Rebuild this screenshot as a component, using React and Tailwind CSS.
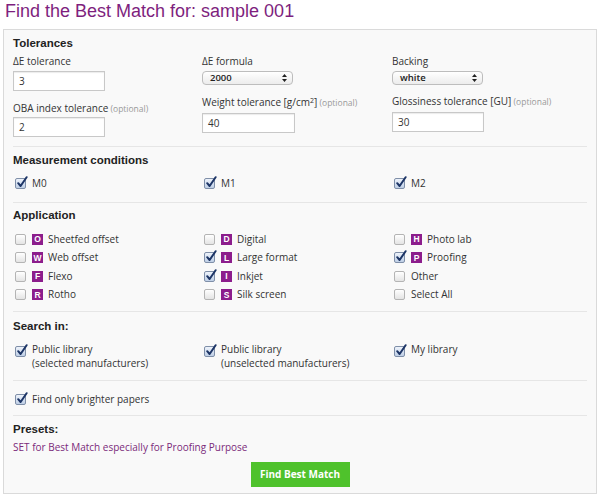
import React from "react";

const Check = ({ checked, className = "" }) => (
  <span
    className={
      "relative inline-block w-[11px] h-[11px] shrink-0 rounded-[2px] border " +
      (checked
        ? "border-[#7f8fa8] bg-gradient-to-b from-[#eef3fb] to-[#bfcfe6] "
        : "border-[#b4b4b4] bg-gradient-to-b from-white to-[#e4e4e4] ") +
      className
    }
  >
    {checked && (
      <svg
        className="absolute left-[0px] top-[-3px] w-[12px] h-[13px]"
        viewBox="0 0 12 13"
      >
        <path
          d="M2.2 7.2 L4.6 10 L10.6 1.2"
          fill="none"
          stroke="#1d3566"
          strokeWidth="2"
          strokeLinecap="round"
          strokeLinejoin="round"
        />
      </svg>
    )}
  </span>
);

const Heading = ({ children }) => (
  <div className="h-[14px] leading-[14px] text-[11.5px] font-bold text-[#222] font-['Liberation_Sans',Arial,sans-serif]">
    {children}
  </div>
);

const Input = ({ value, className = "" }) => (
  <div
    className={
      "w-[92px] h-[20px] border border-[#c8c8c8] bg-white pl-[5px] text-[10px] leading-[18px] text-[#333] shadow-[inset_0_1px_1px_rgba(0,0,0,0.08)] " +
      className
    }
  >
    {value}
  </div>
);

const Select = ({ value, className = "" }) => (
  <div
    className={
      "w-[91px] h-[14px] rounded-[4px] border border-[#bdbdbd] bg-gradient-to-b from-white to-[#ececec] flex items-center justify-between pl-[7px] pr-[5px] " +
      className
    }
  >
    <span className="text-[9.5px] leading-[12px] font-semibold text-[#222]">{value}</span>
    <svg className="w-[5px] h-[8px]" viewBox="0 0 5 8">
      <path d="M2.5 0 L5 3 L0 3 Z M2.5 8 L5 5 L0 5 Z" fill="#222" />
    </svg>
  </div>
);

const Optional = () => (
  <span className="text-[8.5px] text-[#9a9a9a]"> (optional)</span>
);

const Label = ({ children, className = "" }) => (
  <div className={"h-[14px] leading-[14px] text-[10px] text-[#333] whitespace-nowrap " + className}>
    {children}
  </div>
);

const Badge = ({ letter }) => (
  <span className="inline-flex items-center justify-center w-[11px] h-[11px] bg-[#8c1d8c] text-white text-[8.5px] font-bold leading-none font-['Liberation_Sans',Arial,sans-serif]">
    {letter}
  </span>
);

const AppItem = ({ checked, letter, label }) => (
  <div className="h-[18.5px] flex items-center text-[10px] text-[#333]">
    <Check checked={checked} className="ml-[2px]" />
    {letter ? (
      <>
        <span className="ml-[6px] flex">
          <Badge letter={letter} />
        </span>
        <span className="ml-[5px]">{label}</span>
      </>
    ) : (
      <span className="ml-[6px]">{label}</span>
    )}
  </div>
);

const CheckRow = ({ checked, label }) => (
  <div className="h-[14px] flex items-center text-[10px] text-[#333]">
    <Check checked={checked} className="ml-[2px]" />
    <span className="ml-[6px]">{label}</span>
  </div>
);

const CheckMulti = ({ checked, lines }) => (
  <div className="flex items-start text-[10px] leading-[13.5px] text-[#333]">
    <Check checked={checked} className="ml-[2px] mt-[3px]" />
    <div className="ml-[6px]">
      {lines.map((l) => (
        <div key={l}>{l}</div>
      ))}
    </div>
  </div>
);

const cols = "grid grid-cols-[189px_190px_1fr]";

export default function App() {
  const apps = [
    { letter: "O", label: "Sheetfed offset", checked: false },
    { letter: "D", label: "Digital", checked: false },
    { letter: "H", label: "Photo lab", checked: false },
    { letter: "W", label: "Web offset", checked: false },
    { letter: "L", label: "Large format", checked: true },
    { letter: "P", label: "Proofing", checked: true },
    { letter: "F", label: "Flexo", checked: false },
    { letter: "I", label: "Inkjet", checked: true },
    { letter: null, label: "Other", checked: false },
    { letter: "R", label: "Rotho", checked: false },
    { letter: "S", label: "Silk screen", checked: false },
    { letter: null, label: "Select All", checked: false },
  ];

  return (
    <div className="w-[600px] h-[498px] bg-white font-['Open_Sans',sans-serif] text-[#333] overflow-hidden">
      <h1 className="pl-[5px] h-[22px] text-[18px] leading-[22px] font-['Liberation_Sans',Arial,sans-serif] text-[#7e1f7e]">
        Find the Best Match for: sample 001
      </h1>
      <div className="mx-[3px] mt-[7px] h-[465px] border border-[#dadada] bg-[#f9f9f9] px-[9px]">
        {/* Tolerances */}
        <div className="pt-[6px] pb-[9px] border-b border-[#e6e6e6]">
          <Heading>Tolerances</Heading>
          <div className={cols + " mt-[4px]"}>
            <div>
              <Label>ΔE tolerance</Label>
              <Input value="3" className="mt-[3px]" />
              <Label className="mt-[10px]">
                OBA index tolerance
                <Optional />
              </Label>
              <Input value="2" className="mt-[2px]" />
            </div>
            <div>
              <Label>ΔE formula</Label>
              <Select value="2000" className="mt-[3px]" />
              <Label className="mt-[10px]">
                Weight tolerance [g/cm<sup className="text-[7px]">2</sup>]
                <Optional />
              </Label>
              <Input value="40" className="mt-[4px] w-[93px]" />
            </div>
            <div>
              <Label>Backing</Label>
              <Select value="white" className="mt-[3px]" />
              <Label className="mt-[9px]">
                Glossiness tolerance [GU]
                <Optional />
              </Label>
              <Input value="30" className="mt-[4px]" />
            </div>
          </div>
        </div>

        {/* Measurement conditions */}
        <div className="pt-[6px] pb-[12px] border-b border-[#e6e6e6]">
          <Heading>Measurement conditions</Heading>
          <div className={cols + " mt-[9px]"}>
            <CheckRow checked label="M0" />
            <CheckRow checked label="M1" />
            <CheckRow checked label="M2" />
          </div>
        </div>

        {/* Application */}
        <div className="pt-[5px] pb-[7px] border-b border-[#e6e6e6]">
          <Heading>Application</Heading>
          <div className={cols + " mt-[8px]"}>
            {apps.map((a) => (
              <AppItem key={a.label} checked={a.checked} letter={a.letter} label={a.label} />
            ))}
          </div>
        </div>

        {/* Search in */}
        <div className="pt-[7px] pb-[10px] border-b border-[#e6e6e6]">
          <Heading>Search in:</Heading>
          <div className={cols + " mt-[10px]"}>
            <CheckMulti checked lines={["Public library", "(selected manufacturers)"]} />
            <CheckMulti checked lines={["Public library", "(unselected manufacturers)"]} />
            <CheckMulti checked lines={["My library"]} />
          </div>
        </div>

        {/* Brighter */}
        <div className="pt-[11px] pb-[9px] border-b border-[#e6e6e6]">
          <CheckRow checked label="Find only brighter papers" />
        </div>

        {/* Presets */}
        <div className="pt-[6px]">
          <Heading>Presets:</Heading>
          <div className="mt-[4px] h-[14px] leading-[14px] text-[10px] text-[#7b2a7b]">
            SET for Best Match especially for Proofing Purpose
          </div>
          <div className="mt-[8px] flex justify-center">
            <button className="w-[99px] h-[25px] bg-[#4fc22c] text-white text-[10px] font-bold">
              Find Best Match
            </button>
          </div>
        </div>
      </div>
    </div>
  );
}
